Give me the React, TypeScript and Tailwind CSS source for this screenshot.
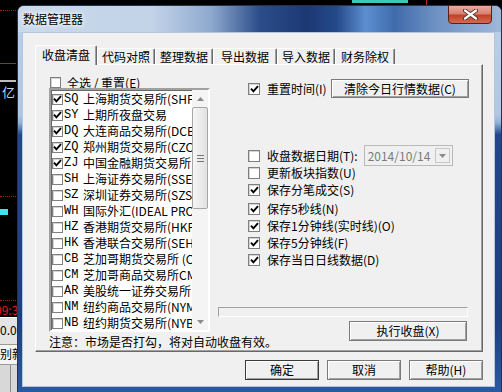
import React from 'react';

type Market = { code: string; name: string; on: boolean };

const markets: Market[] = [
  { code: 'SQ', name: '上海期货交易所(SHFE)', on: true },
  { code: 'SY', name: '上期所夜盘交易', on: true },
  { code: 'DQ', name: '大连商品交易所(DCE)', on: true },
  { code: 'ZQ', name: '郑州期货交易所(CZCE)', on: true },
  { code: 'ZJ', name: '中国金融期货交易所', on: true },
  { code: 'SH', name: '上海证券交易所(SSE)', on: false },
  { code: 'SZ', name: '深圳证券交易所(SZSE)', on: false },
  { code: 'WH', name: '国际外汇(IDEAL PRO)', on: false },
  { code: 'HZ', name: '香港期货交易所(HKFE)', on: false },
  { code: 'HK', name: '香港联合交易所(SEHK)', on: false },
  { code: 'CB', name: '芝加哥期货交易所 (CBOT)', on: false },
  { code: 'CM', name: '芝加哥商品交易所CME', on: false },
  { code: 'AR', name: '美股统一证券交易所', on: false },
  { code: 'NM', name: '纽约商品交易所(NYMEX)', on: false },
  { code: 'NB', name: '纽约期货交易所(NYBOT)', on: false },
];

const options: { label: string; on: boolean; gap?: boolean }[] = [
  { label: '更新板块指数(U)', on: false },
  { label: '保存分笔成交(S)', on: true },
  { label: '保存5秒线(N)', on: true, gap: true },
  { label: '保存1分钟线(实时线)(O)', on: true },
  { label: '保存5分钟线(F)', on: true },
  { label: '保存当日日线数据(D)', on: true },
];

function CheckBox({ on, big }: { on?: boolean; big?: boolean }) {
  return (
    <span
      className={`${big ? 'h-[12px] w-[12px]' : 'h-[11px] w-[11px]'} flex shrink-0 items-center justify-center border border-[#7f7f7f] bg-white shadow-[inset_1px_1px_0_#d4d4d4]`}
    >
      {on && (
        <svg width="9" height="8" viewBox="0 0 9 8">
          <path d="M1 3.6 L3.4 6.4 L8 1.2" fill="none" stroke="#000" strokeWidth="1.9" />
        </svg>
      )}
    </span>
  );
}

function Button({ children, className = '', primary = false }: { children: React.ReactNode; className?: string; primary?: boolean }) {
  return (
    <div
      className={`flex shrink-0 items-center justify-center border bg-[#f0f0f0] shadow-[inset_1px_1px_0_#ffffff,inset_-1px_-1px_0_#a0a0a0] ${primary ? 'border-[#3a3a3a]' : 'border-[#7a7a7a]'} ${className}`}
    >
      {children}
    </div>
  );
}

function Tri({ up }: { up?: boolean }) {
  return (
    <svg width="7" height="4" viewBox="0 0 7 4">
      <path d={up ? 'M0 4 L3.5 0 L7 4 Z' : 'M0 0 L7 0 L3.5 4 Z'} fill="#8a8a8a" />
    </svg>
  );
}

function Backdrop() {
  return (
    <>
      <div className="absolute left-0 top-[10px] w-[16px] border-t border-dotted border-[#d01010]" />
      <div className="absolute left-0 top-[63px] h-px w-[16px] bg-[#e01010]" />
      <div className="absolute left-0 top-[80px] h-[2px] w-[16px] bg-[#bdbdbd]" />
      <div className="absolute left-[2px] top-[84px] text-[13px] leading-[16px] text-[#bcd4f0]">亿</div>
      <div className="absolute left-0 top-[196px] w-[16px] border-t border-dotted border-[#d01010]" />
      <div className="absolute left-0 top-[209px] h-[6px] w-[8px] bg-[#3fe3f0]" />
      <div className="absolute left-0 top-[300px] w-[16px] border-t border-dotted border-[#d01010]" />
      <div className="absolute left-[-5px] top-[303px] text-[12px] leading-[14px] text-[#e02020]">09:3</div>
      <div className="absolute left-0 top-[317px] flex h-[75px] w-[24px] flex-col border-t border-white bg-[#e4e4e4]">
        <div className="h-[26px] text-[12px] leading-[24px] text-black">0.0</div>
        <div className="h-[20px] border-t border-[#9a9a9a] bg-[#f4f4f4] text-[12px] leading-[18px] text-black">别新</div>
        <div className="flex flex-1 border-t border-[#9a9a9a] bg-[#d8d8d8] pl-[10px]">
          <div className="w-px bg-[#8a8a8a]" />
        </div>
      </div>
      <div className="absolute left-[352px] top-0 h-[3px] w-[56px] bg-[#3cc7b8]" />
      <div className="absolute left-[426px] top-0 h-[5px] w-px bg-[#c02020]" />
    </>
  );
}

function Tabs() {
  const others: [string, string][] = [
    ['代码对照', 'w-[58px]'],
    ['整理数据', 'w-[58px]'],
    ['导出数据', 'w-[64px]'],
    ['导入数据', 'w-[58px]'],
    ['财务除权', 'w-[60px]'],
  ];
  return (
    <div className="relative z-10 -mb-px flex h-[20px] items-end">
      <div className="flex h-[20px] w-[62px] items-center justify-center rounded-t-[2px] border-l border-t border-r border-l-white border-t-white border-r-[#696969] bg-[#f0f0f0] pb-[2px] shadow-[inset_-1px_0_0_#a0a0a0]">
        收盘清盘
      </div>
      {others.map(([label, w]) => (
        <div
          key={label}
          className={`${w} mb-px flex h-[16px] items-center justify-center rounded-t-[2px] border-l border-t border-r border-l-white border-t-white border-r-[#696969] bg-[#f0f0f0] shadow-[inset_-1px_0_0_#a0a0a0]`}
        >
          {label}
        </div>
      ))}
    </div>
  );
}

function MarketList() {
  return (
    <div className="flex w-[161px] shrink-0 flex-col">
      <div className="mt-[12px] flex h-[11px] items-center gap-[6px] pl-[1px] leading-[11px]">
        <CheckBox />
        <span>全选 / 重置(E)</span>
      </div>
      <div className="flex h-[244px] border-2 border-t-[#a0a0a0] border-l-[#a0a0a0] border-b-white border-r-white bg-white shadow-[inset_1px_1px_0_#696969]">
        <div className="flex flex-1 flex-col overflow-hidden pt-[1px]">
          {markets.map((m) => (
            <div key={m.code} className="flex h-[16px] shrink-0 items-center whitespace-nowrap pl-[1px] leading-[16px]">
              <CheckBox on={m.on} />
              <span className="w-[20px] shrink-0 pl-[1px] font-['Liberation_Mono',monospace] text-[12px]">{m.code}</span>
              <span>{m.name}</span>
            </div>
          ))}
        </div>
        <div className="flex w-[16px] shrink-0 flex-col bg-[#f4f4f4]">
          <div className="flex h-[17px] items-center justify-center">
            <Tri up />
          </div>
          <div className="flex h-[102px] flex-col items-center justify-center gap-[2px] rounded-[2px] border border-[#a6a6a6] bg-[linear-gradient(90deg,#f6f6f6,#e2e2e2)]">
            <div className="h-px w-[7px] bg-[#777]" />
            <div className="h-px w-[7px] bg-[#777]" />
            <div className="h-px w-[7px] bg-[#777]" />
          </div>
          <div className="flex-1" />
          <div className="flex h-[17px] items-center justify-center">
            <Tri />
          </div>
        </div>
      </div>
      <div className="mt-[2px] whitespace-nowrap leading-[16px]">注意：市场是否打勾，将对自动收盘有效。</div>
    </div>
  );
}

function OptionsColumn() {
  return (
    <div className="ml-[8px] flex w-[251px] shrink-0 flex-col">
      <div className="mt-[14px] flex h-[19px] items-center pl-[30px]">
        <CheckBox on big />
        <span className="ml-[7px] whitespace-nowrap">重置时间(I)</span>
        <Button className="ml-auto h-[19px] w-[138px]">清除今日行情数据(C)</Button>
      </div>
      <div className="mt-[49px] flex h-[17px] items-center pl-[30px]">
        <CheckBox big />
        <span className="ml-[7px] whitespace-nowrap">收盘数据日期(T):</span>
        <div className="-my-[2px] ml-[6px] flex h-[21px] w-[89px] shrink-0 items-center border border-[#b9b9b9] bg-[#f0f0f0] pl-[3px] pr-[2px] text-[#7a7a7a]">
          <span className="flex-1">2014/10/14</span>
          <div className="flex h-[15px] w-[15px] items-center justify-center border border-[#c8c8c8] bg-[#f0f0f0]">
            <Tri />
          </div>
        </div>
      </div>
      {options.map((o) => (
        <div key={o.label} className={`${o.gap ? 'mt-[2px]' : ''} flex h-[17px] items-center pl-[30px]`}>
          <CheckBox on={o.on} big />
          <span className="ml-[7px] whitespace-nowrap">{o.label}</span>
        </div>
      ))}
      <div className="mt-[39px] h-[10px] w-[250px] border border-t-[#a0a0a0] border-l-[#a0a0a0] border-b-white border-r-white bg-[#f0f0f0]" />
      <Button className="mr-[2px] mt-[4px] h-[20px] w-[118px] self-end">执行收盘(X)</Button>
    </div>
  );
}

export default function App() {
  return (
    <div className="relative h-[392px] w-[502px] overflow-hidden bg-black font-['Noto_Sans_CJK_SC',sans-serif] text-[12px] text-black">
      <Backdrop />
      <div className="absolute left-[17px] top-[5px] flex h-[392px] w-[485px] flex-col rounded-t-[7px] border border-[#23344f] bg-[linear-gradient(180deg,#bcd0e8_0%,#b0c6e2_28%,#8fb0d8_30%,#23478c_33%,#1c3f80_80%,#2a5ba3_100%)]">
        <div className="relative flex h-[26px] shrink-0 items-center rounded-t-[6px] bg-[linear-gradient(90deg,#cad9eb_0%,#c2d3e8_28%,#8ea9cf_40%,#2c4d8a_50%,#1b3873_60%,#244a8a_66%,#5d8fd0_72%,#3f6bab_78%,#6c8fc2_86%,#9fb8da_100%)] pl-[5px]">
          <span className="leading-[14px] [text-shadow:0_0_4px_#ffffff,0_0_6px_#ffffff]">数据管理器</span>
          <div className="absolute right-[9px] top-[-1px] flex h-[19px] w-[44px] items-center justify-center rounded-b-[4px] border border-[#5a1f1a] bg-[linear-gradient(180deg,#e9aba0_0%,#d9806f_45%,#c0412a_55%,#d66a4e_100%)]">
            <svg width="15" height="11" viewBox="0 0 15 11">
              <path d="M2 1.5 L13 9.5 M13 1.5 L2 9.5" stroke="#4a2a28" strokeWidth="4" strokeLinecap="round" />
              <path d="M2 1.5 L13 9.5 M13 1.5 L2 9.5" stroke="#ffffff" strokeWidth="2.2" strokeLinecap="round" />
            </svg>
          </div>
        </div>
        <div className="ml-[4px] flex h-[355px] w-[473px] flex-col border border-[#b5c6dc] bg-[#f0f0f0] px-[12px] pt-[12px]">
          <Tabs />
          <div className="flex h-[288px] w-[448px] border border-l-white border-t-white border-r-[#696969] border-b-[#696969] shadow-[inset_-1px_-1px_0_#a0a0a0] pl-[13px]">
            <MarketList />
            <OptionsColumn />
          </div>
          <div className="mt-[8px] flex w-[448px] justify-end gap-[8px]">
            <Button primary className="h-[20px] w-[74px]">确定</Button>
            <Button className="h-[20px] w-[74px]">取消</Button>
            <Button className="h-[20px] w-[74px]">帮助(H)</Button>
          </div>
        </div>
      </div>
    </div>
  );
}
